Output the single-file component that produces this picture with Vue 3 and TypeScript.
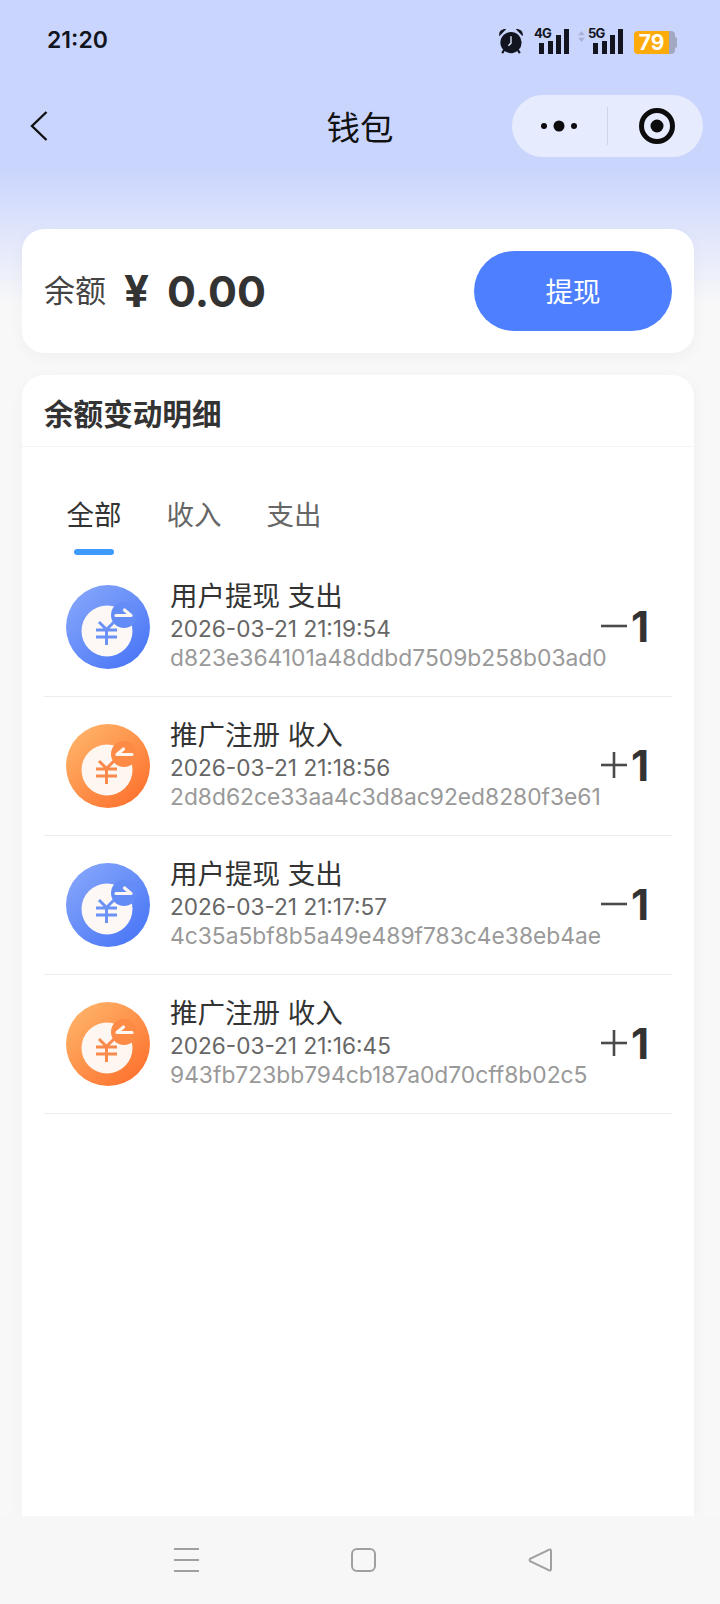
<script setup lang="ts">
import { ref } from "vue";

type Record = {
  title: string;
  time: string;
  id: string;
  amount: string;
  income: boolean;
};

const tabs = ["全部", "收入", "支出"];
const activeTab = ref(0);

const records: Record[] = [
  { title: "用户提现 支出", time: "2026-03-21 21:19:54", id: "d823e364101a48ddbd7509b258b03ad0", amount: "1", income: false },
  { title: "推广注册 收入", time: "2026-03-21 21:18:56", id: "2d8d62ce33aa4c3d8ac92ed8280f3e61", amount: "1", income: true },
  { title: "用户提现 支出", time: "2026-03-21 21:17:57", id: "4c35a5bf8b5a49e489f783c4e38eb4ae", amount: "1", income: false },
  { title: "推广注册 收入", time: "2026-03-21 21:16:45", id: "943fb723bb794cb187a0d70cff8b02c5", amount: "1", income: true },
];
</script>

<template>
  <div class="page">
    <div class="status">
      <span class="clock">21:20</span>
      <div class="status-icons">
        <svg class="alarm" width="26" height="26" viewBox="0 0 24 25">
          <circle cx="12" cy="14" r="10.200" fill="#12151f" />
          <path d="M12 8v6.500l-2.500 2.500" fill="none" stroke="#d5dcf5" stroke-width="1.400" />
          <path d="M.8 8C-.2 3.500 3 .5 7.500 1zM23.200 8c1-4.500-2.200-7.500-6.700-7z" fill="#12151f" />
          <path d="M5.500 21l-2 3.200M18.500 21l2 3.200" stroke="#12151f" stroke-width="2" />
        </svg>
        <div class="signal">
          <span class="net">4G</span>
          <svg width="31" height="25" viewBox="0 0 31 25">
            <rect x="0" y="14" width="5" height="11" fill="#12151f" />
            <rect x="9" y="12" width="5" height="13" fill="#12151f" />
            <rect x="17" y="6" width="5" height="19" fill="#12151f" />
            <rect x="25" y="0" width="5" height="25" fill="#12151f" />
          </svg>
        </div>
        <svg class="updown" width="7" height="11" viewBox="0 0 7 11">
          <path d="M3.500 0L7 4.200H0zM3.500 11L0 6.800h7z" fill="#a9b2d6" />
        </svg>
        <div class="signal signal-5g">
          <span class="net">5G</span>
          <svg width="31" height="25" viewBox="0 0 31 25">
            <rect x="0" y="14" width="5" height="11" fill="#12151f" />
            <rect x="9" y="12" width="5" height="13" fill="#12151f" />
            <rect x="17" y="6" width="5" height="19" fill="#12151f" />
            <rect x="25" y="0" width="5" height="25" fill="#12151f" />
          </svg>
        </div>
        <div class="battery">
          <span class="battery-level">79</span>
          <span class="battery-rest"></span>
          <span class="battery-cap"></span>
        </div>
      </div>
    </div>

    <div class="navbar">
      <div class="nav-left">
        <svg width="18" height="30" viewBox="0 0 18 30">
          <path d="M16.500 1L2 15l14.500 14" fill="none" stroke="#111" stroke-width="2.400" />
        </svg>
      </div>
      <span class="nav-title">钱包</span>
      <div class="nav-right">
        <div class="capsule">
          <svg class="capsule-dots" width="38" height="12" viewBox="0 0 38 12">
            <circle cx="4" cy="6" r="3" fill="#0c0c0c" />
            <circle cx="19" cy="6" r="5.500" fill="#0c0c0c" />
            <circle cx="34" cy="6" r="3" fill="#0c0c0c" />
          </svg>
          <span class="capsule-line"></span>
          <svg class="capsule-target" width="36" height="36" viewBox="0 0 36 36">
            <circle cx="18" cy="18" r="15.500" fill="none" stroke="#0c0c0c" stroke-width="5" />
            <circle cx="18" cy="18" r="6.500" fill="#0c0c0c" />
          </svg>
        </div>
      </div>
    </div>

    <div class="content">
      <section class="card balance">
        <span class="balance-label">余额</span>
        <span class="balance-yen">¥</span>
        <span class="balance-num">0.00</span>
        <button class="withdraw">提现</button>
      </section>

      <section class="card detail">
        <div class="detail-head">余额变动明细</div>
        <div class="tabs">
          <div
            v-for="(tab, i) in tabs"
            :key="tab"
            class="tab"
            :class="{ active: activeTab === i }"
            @click="activeTab = i"
          >
            {{ tab }}
          </div>
        </div>
        <div class="list">
          <div v-for="item in records" :key="item.id" class="row">
            <svg class="row-icon" width="84" height="84" viewBox="0 0 84 84">
              <defs>
                <linearGradient id="grad-blue" x1="0.15" y1="0.1" x2="0.85" y2="0.9">
                  <stop offset="0" stop-color="#82a3fb" />
                  <stop offset="1" stop-color="#4b78f6" />
                </linearGradient>
                <linearGradient id="grad-orange" x1="0.15" y1="0.1" x2="0.85" y2="0.9">
                  <stop offset="0" stop-color="#ffb066" />
                  <stop offset="1" stop-color="#fd7430" />
                </linearGradient>
              </defs>
              <circle cx="42" cy="42" r="42" :fill="item.income ? 'url(#grad-orange)' : 'url(#grad-blue)'" />
              <circle cx="41" cy="46" r="25.500" :fill="item.income ? '#fdf6f1' : '#fdf8f5'" />
              <circle cx="58" cy="30" r="13" :fill="item.income ? '#fd8a45' : '#648cf7'" />
              <path
                :d="item.income ? 'M66 30.500H51l6.500-5.500' : 'M50 30.500h15l-6.500-5.500'"
                fill="none"
                stroke="#fdf6f1"
                stroke-width="3.200"
                stroke-linecap="round"
                stroke-linejoin="round"
              />
              <path
                d="M33 37l7.500 7.500L48 37M30 45h21M30 52h21M40.500 45v15"
                fill="none"
                :stroke="item.income ? '#f98a4c' : '#6a91f3'"
                stroke-width="3"
              />
            </svg>
            <div class="row-text">
              <div class="row-title">{{ item.title }}</div>
              <div class="row-time">{{ item.time }}</div>
              <div class="row-id">{{ item.id }}</div>
            </div>
            <div class="row-amount">
              <svg width="26" height="26" viewBox="0 0 26 26">
                <path d="M0 13h26" stroke="#4a4a4a" stroke-width="2.600" />
                <path v-if="item.income" d="M13 0v26" stroke="#4a4a4a" stroke-width="2.600" />
              </svg>
              <span>{{ item.amount }}</span>
            </div>
          </div>
        </div>
      </section>
    </div>

    <div class="sysnav">
      <svg width="25" height="24" viewBox="0 0 25 24">
        <path d="M0 1h25M0 12h25M0 23h25" stroke="#a0a0a0" stroke-width="2" />
      </svg>
      <svg width="25" height="24" viewBox="0 0 25 24">
        <rect x="1" y="1" width="23" height="22" rx="5" fill="none" stroke="#a0a0a0" stroke-width="2" />
      </svg>
      <svg width="25" height="24" viewBox="0 0 24 24">
        <path d="M22.500 3v18c0 1.600-1.200 2-2.300 1.200L2 13.300c-1.200-.8-1.200-1.900 0-2.700L20.200 1.800c1.100-.8 2.300-.4 2.300 1.200z" fill="none" stroke="#a0a0a0" stroke-width="2" />
      </svg>
    </div>
  </div>
</template>

<style scoped>
.page {
  width: 720px;
  height: 1604px;
  display: flex;
  flex-direction: column;
  overflow: hidden;
  background: linear-gradient(180deg, #cad5fe 0, #cad5fe 170px, #dae1fc 215px, #f8f8f9 305px, #f8f8f9 100%);
  font-family: Inter, "Noto Sans CJK SC", sans-serif;
  color: #333;
}

.status {
  height: 81px;
  flex: none;
  display: flex;
  align-items: flex-start;
  justify-content: space-between;
  padding: 26px 43px 0 47px;
  box-sizing: border-box;
}

.clock {
  font-size: 23px;
  line-height: 29px;
  font-weight: 600;
  color: #12151f;
}

.status-icons {
  display: flex;
  align-items: flex-start;
  padding-top: 2px;
}

.signal {
  position: relative;
  margin-left: 15px;
  padding-top: 1px;
}

.signal svg {
  display: block;
}

.net {
  position: absolute;
  left: -5px;
  top: -2px;
  font-size: 13px;
  line-height: 14px;
  font-weight: 700;
  letter-spacing: -0.8px;
  color: #12151f;
}

.updown {
  margin: 3px 0 0 8px;
}

.signal-5g {
  margin-left: 8px;
}

.battery {
  display: flex;
  height: 23px;
  margin: 3px 0 0 10px;
}

.battery-level {
  width: 35px;
  background: #fdab0a;
  border-radius: 4px 0 0 4px;
  color: #fff;
  font-size: 21px;
  line-height: 23px;
  font-weight: 700;
  text-align: center;
}

.battery-rest {
  width: 6px;
  background: #a3a8c2;
  border-radius: 0 4px 4px 0;
}

.battery-cap {
  width: 2px;
  height: 11px;
  margin-top: 6px;
  background: #a3a8c2;
  border-radius: 0 2px 2px 0;
}

.navbar {
  height: 90px;
  flex: none;
  display: grid;
  grid-template-columns: 1fr auto 1fr;
  align-items: center;
}

.nav-left {
  padding-left: 30px;
  display: flex;
}

.nav-title {
  padding-top: 4px;
  font-size: 33.500px;
  line-height: 44px;
  color: #111;
}

.nav-right {
  display: flex;
  justify-content: flex-end;
  padding-right: 17px;
}

.capsule {
  width: 191px;
  height: 62px;
  border-radius: 31px;
  background: #e6ebfd;
  display: flex;
  align-items: center;
  box-sizing: border-box;
  padding-left: 28px;
}

.capsule-line {
  width: 1px;
  height: 38px;
  margin-left: 29px;
  background: #cfd5ea;
}

.capsule-target {
  margin-left: 31px;
}

.content {
  flex: 1;
  min-height: 0;
  display: flex;
  flex-direction: column;
  gap: 22px;
  padding: 58px 26px 0 22px;
}

.card {
  background: #fff;
  box-shadow: 0 4px 16px rgba(0, 0, 0, 0.04);
}

.balance {
  height: 124px;
  flex: none;
  border-radius: 22px;
  display: flex;
  align-items: center;
  padding: 0 22px;
}

.balance-label {
  margin-bottom: 5px;
  font-size: 31px;
  color: #444;
}

.balance-yen {
  margin-left: 18px;
  font-size: 44px;
  font-weight: 700;
  color: #333;
}

.balance-num {
  margin-left: 18px;
  font-size: 43px;
  font-weight: 700;
  color: #333;
}

.withdraw {
  margin-left: auto;
  width: 198px;
  height: 80px;
  padding-bottom: 4px;
  border: none;
  border-radius: 40px;
  background: #4d7fff;
  color: #fff;
  font-family: inherit;
  font-size: 27.500px;
}

.detail {
  flex: 1;
  border-radius: 22px 22px 0 0;
  display: flex;
  flex-direction: column;
}

.detail-head {
  height: 72px;
  flex: none;
  box-sizing: border-box;
  padding: 3px 22px 0;
  display: flex;
  align-items: center;
  font-size: 29.600px;
  font-weight: 700;
  color: #333;
  border-bottom: 1px solid #f5f5f5;
}

.tabs {
  display: flex;
  padding: 48px 0 0 44.500px;
  gap: 45px;
}

.tab {
  position: relative;
  font-size: 27.500px;
  line-height: 40px;
  height: 59px;
  color: #666;
}

.tab.active {
  color: #333;
}

.tab.active::after {
  content: "";
  position: absolute;
  left: 7.500px;
  bottom: -1px;
  width: 40px;
  height: 6px;
  border-radius: 3px;
  background: #3d9bff;
}

.list {
  margin: 0 22px;
  padding-top: 4px;
}

.row {
  height: 139px;
  box-sizing: border-box;
  display: flex;
  align-items: center;
  padding: 0 23px 0 22px;
  border-bottom: 1px solid #ececec;
}

.row-icon {
  flex: none;
}

.row-text {
  flex: 1;
  min-width: 0;
  margin: 0 0 2px 20px;
  white-space: nowrap;
}

.row-title {
  font-size: 27.500px;
  line-height: 35px;
  color: #333;
}

.row-time {
  font-size: 22.600px;
  line-height: 29px;
  color: #666;
}

.row-id {
  font-size: 22.800px;
  line-height: 30px;
  color: #999;
}

.row-amount {
  flex: none;
  display: flex;
  align-items: center;
  gap: 4px;
  margin-bottom: 2px;
  font-size: 42px;
  font-weight: 700;
  color: #333;
}

.sysnav {
  height: 88px;
  flex: none;
  display: flex;
  align-items: center;
  justify-content: center;
  gap: 152px;
  background: #f7f7f7;
  padding-left: 6px;
}
</style>

<style>
body {
  margin: 0;
}
</style>
